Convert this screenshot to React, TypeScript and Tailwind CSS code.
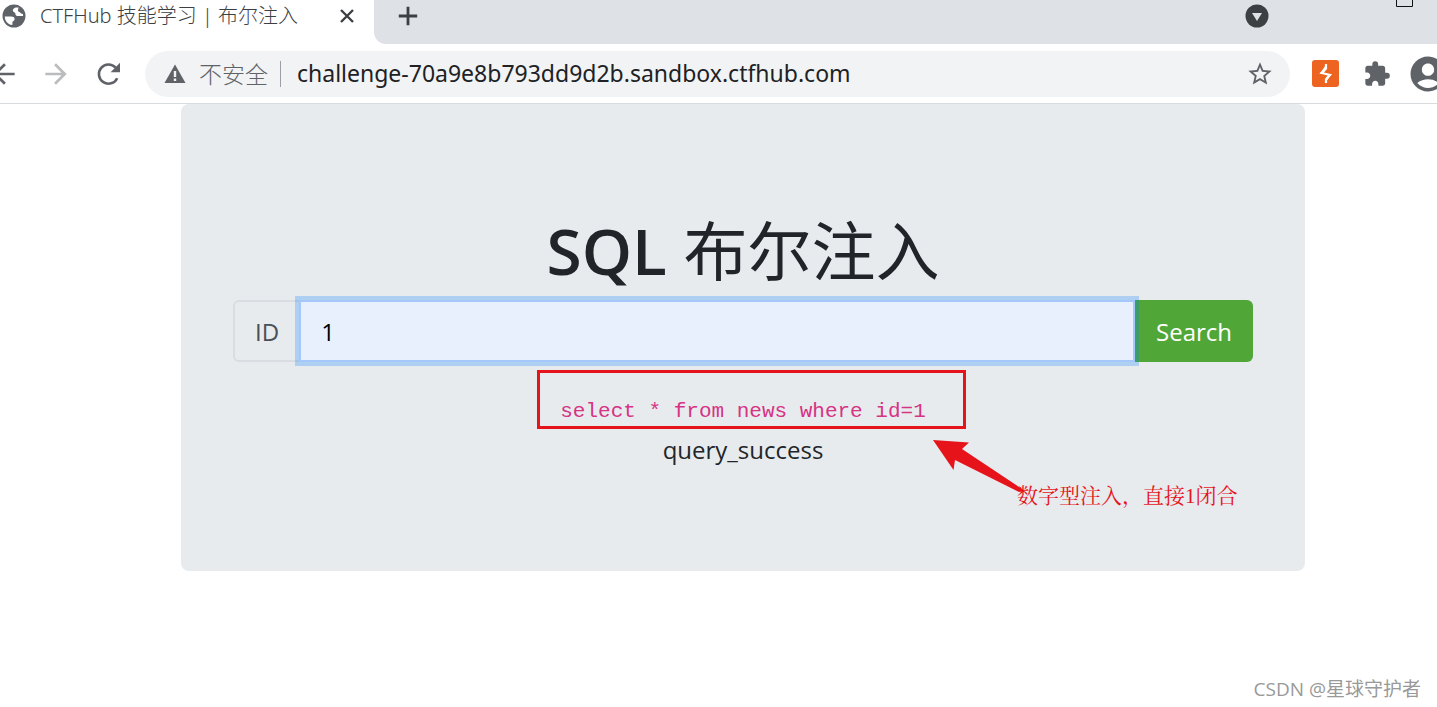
import { useState } from "react";
import {
  MdAccountCircle,
  MdArrowBack,
  MdArrowForward,
  MdExtension,
  MdStarOutline,
} from "react-icons/md";

function GlobeIcon() {
  return (
    <svg viewBox="0 0 24 24" className="size-6">
      <circle cx="12" cy="12" r="11.5" fill="#5f6368" />
      <path
        d="M2.800 12.500h6.200c2.800 0 3.600 1 3.600 2.700 0 1.800-2.200 1.600-2.200 3.200v2.600C6 20.700 2.600 16.800 2.800 12.500z"
        fill="#fff"
      />
      <path
        d="M15.500 3.300c-2.600.2-4.700 1.400-4.700 3.100 0 1.800 2.600 1.500 2.600 3.300 0 1.500 1 2.300 2.800 2.300h4.900c.2-4-2-7.300-5.600-8.700z"
        fill="#fff"
      />
      <path d="M16.500 3.500l-.5 2.500c-.3 1.200.5 1.700 1.400 2.100 1 .5 1.500 1.900 4 1.900l-1-4z" fill="#5f6368" />
    </svg>
  );
}

function TabStrip() {
  return (
    <div className="flex h-11 items-stretch bg-white">
      <div className="flex w-[374px] shrink-0 items-start justify-between pr-[19px] pl-[2px]">
        <div className="flex h-8 items-center gap-[14px]">
          <GlobeIcon />
          <span className="font-['Noto_Sans','Noto_Sans_CJK_SC',sans-serif] text-[20px] leading-8 font-light whitespace-nowrap text-[#3c4043]">
            CTFHub 技能学习 | 布尔注入
          </span>
        </div>
        <button type="button" aria-label="Close tab" className="flex h-8 items-center text-[#3c4043]">
          <svg viewBox="0 0 16 16" className="size-4">
            <path d="M2 2l12 12M14 2L2 14" stroke="currentColor" strokeWidth="2.400" />
          </svg>
        </button>
      </div>
      <div className="flex flex-1 items-start justify-between rounded-bl-xl bg-[#dee1e6] pr-6 pl-6">
        <button type="button" aria-label="New tab" className="flex h-8 items-center text-[#3c4043]">
          <svg viewBox="0 0 20 20" className="size-5">
            <path d="M10 .8v18.400M.8 10h18.400" stroke="currentColor" strokeWidth="2.800" />
          </svg>
        </button>
        <div className="flex items-start gap-[127px]">
          <button type="button" aria-label="Search tabs" className="flex h-8 items-center">
            <svg viewBox="0 0 24 24" className="size-6">
              <circle cx="12" cy="12" r="11.5" fill="#3c4043" />
              <path d="M7 9h10l-5 8z" fill="#dee1e6" />
            </svg>
          </button>
          <button type="button" aria-label="Maximize" className="flex">
            <svg viewBox="0 0 17 8" className="h-2 w-[17px]">
              <path d="M.5 0v6.5h16V0" fill="none" stroke="#111" />
            </svg>
          </button>
        </div>
      </div>
    </div>
  );
}

function Toolbar() {
  return (
    <div className="flex h-15 items-center overflow-hidden border-b border-[#d9dcdf] bg-white text-[#5f6368]">
      <div className="-ml-3 flex shrink-0 items-center gap-5 pr-[21px]">
        <button type="button" aria-label="Back">
          <MdArrowBack className="size-8" />
        </button>
        <button type="button" aria-label="Forward" className="text-[#babcbe]">
          <MdArrowForward className="size-8" />
        </button>
        <button type="button" aria-label="Reload">
          <svg viewBox="0 0 32 32" className="size-8">
            <path
              d="M25.200 20.200A9.600 9.600 0 1 1 23.600 9.600"
              fill="none"
              stroke="currentColor"
              strokeWidth="2.600"
            />
            <path d="M28 4.800v9.400h-9.400z" fill="currentColor" />
          </svg>
        </button>
      </div>
      <div className="flex h-[46px] min-w-0 flex-1 items-center rounded-full bg-[#f1f3f4] pr-4 pl-[18px]">
        <svg viewBox="0 0 24 24" className="size-6 shrink-0">
          <path d="M12 2.500L22.500 21h-21z" fill="#5f6368" />
          <path d="M10.800 9h2.400v6h-2.400zM10.800 16.500h2.400V19h-2.400z" fill="#f1f3f4" />
        </svg>
        <span className="ml-3 shrink-0 text-[23px] leading-8 font-light">不安全</span>
        <span className="mr-4 ml-3 h-[26px] w-px shrink-0 bg-[#9aa0a6]" />
        <input
          aria-label="Address"
          defaultValue="challenge-70a9e8b793dd9d2b.sandbox.ctfhub.com"
          className="h-8 min-w-0 flex-1 bg-transparent font-['Noto_Sans',sans-serif] text-[23px] text-[#202124] outline-none"
        />
        <button type="button" aria-label="Bookmark this page">
          <MdStarOutline className="size-7" />
        </button>
      </div>
      <div className="-mr-3 flex shrink-0 items-center gap-6 pl-[22px]">
        <button type="button" aria-label="Burp Suite">
          <svg viewBox="0 0 27 27" className="size-[27px]">
            <rect width="27" height="27" rx="3" fill="#ec6420" />
            <path
              d="M14 4v4.500L9.500 13l8.500 2-4 4.500V23"
              fill="none"
              stroke="#fff"
              strokeWidth="2.200"
            />
            <path d="M14.800 3.500L8 13.500l3 .2 3.800-5.200zM13 23.500l6.500-9.500-3 .2-3.500 5z" fill="#fff" />
          </svg>
        </button>
        <button type="button" aria-label="Extensions">
          <MdExtension className="size-7" />
        </button>
        <button type="button" aria-label="Profile" className="-ml-2">
          <MdAccountCircle className="size-[42px]" />
        </button>
      </div>
    </div>
  );
}

function Annotation() {
  return (
    <>
      <div className="pointer-events-none absolute -top-1 left-1/2 -ml-[206px] h-[59px] w-[429px] border-3 border-[#e6131a]" />
      <div className="pointer-events-none absolute top-[66px] left-1/2 ml-[190px]">
        <svg viewBox="0 0 94 54" className="h-[54px] w-[94px]">
          <path d="M0 0L36 2.500 29 9 92 51 86 52 22 20 20.500 30z" fill="#e6131a" />
        </svg>
      </div>
      <p className="pointer-events-none absolute top-[108px] left-1/2 ml-[274px] font-['Liberation_Serif','Noto_Serif_CJK_SC','Noto_Sans_CJK_SC',serif] text-[21px] leading-7 whitespace-nowrap text-[#e6131a]">
        数字型注入，直接1闭合
      </p>
    </>
  );
}

export default function App() {
  const [id, setId] = useState("1");

  return (
    <div className="flex min-h-screen flex-col bg-white font-['Open_Sans','Noto_Sans_CJK_SC',sans-serif]">
      <header>
        <TabStrip />
        <Toolbar />
      </header>
      <main className="flex-1 pr-[132px] pl-[181px]">
        <section className="rounded-lg bg-[#e8ebee] px-[52px] pt-[102px] pb-[101px] text-center text-[#212529]">
          <h1 className="text-[64px] leading-[90px] font-semibold">
            SQL <span className="font-normal">布尔注入</span>
          </h1>
          <form className="mt-1 flex h-[62px] text-2xl" onSubmit={(e) => e.preventDefault()}>
            <label
              htmlFor="news-id"
              className="flex items-center rounded-l-md border-2 border-r-0 border-[#d9dce1] px-5 pt-[2px] text-[#495057]"
            >
              ID
            </label>
            <input
              id="news-id"
              value={id}
              onChange={(e) => setId(e.target.value)}
              className="z-10 min-w-0 flex-1 border-2 border-[#a5c8fc] bg-[#e8f0fe] px-5 pt-[2px] text-black ring-4 ring-[#007bff]/25 outline-none"
            />
            <button type="submit" className="rounded-r-md bg-[#50a738] px-[21px] pt-[2px] text-white">
              Search
            </button>
          </form>
          <div className="relative mt-3">
            <code className="block pt-[22px] font-['Liberation_Mono',monospace] text-[21px] leading-8 text-[#d63384]">
              select * from news where id={id}
            </code>
            <p className="pt-1 pb-[2px] text-2xl leading-9">query_success</p>
            <Annotation />
          </div>
        </section>
      </main>
      <footer className="self-end pr-4 pb-1 text-[19px] leading-7 text-[#999]">
        CSDN @星球守护者
      </footer>
    </div>
  );
}
